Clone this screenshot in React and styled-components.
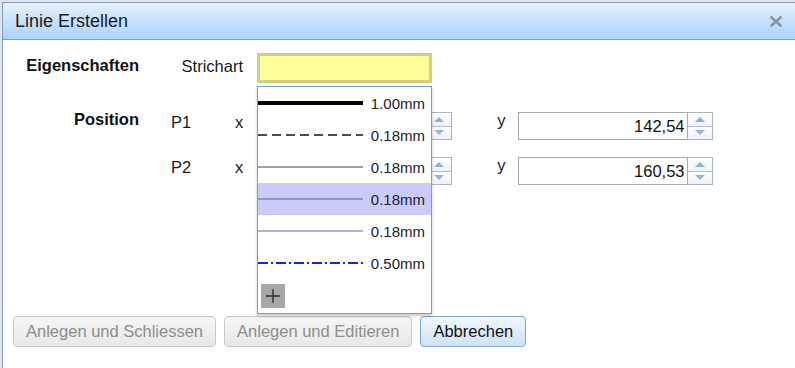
import React from "react";
import styled, { createGlobalStyle } from "styled-components";

const Global = createGlobalStyle`
  html, body { margin: 0; padding: 0; background: #e3e3e3; overflow: hidden; }
  body { font-family: "Liberation Sans", Arial, Helvetica, sans-serif; color: #1c1c1c; }
  * { box-sizing: border-box; }
`;

const Dialog = styled.div`
  margin: 2px 0 0 2px;
  width: 800px;
  height: 366px;
  overflow: hidden;
  border: 1px solid #7f9cbd;
  border-bottom: none;
  background: #fff;
  display: flex;
  flex-direction: column;
`;

const TitleBar = styled.div`
  height: 37px;
  flex-shrink: 0;
  display: flex;
  align-items: center;
  justify-content: space-between;
  padding: 0 19px 0 12px;
  background: linear-gradient(#e6f1fd, #a9d3fb);
  border-bottom: 1px solid #7e9fc3;
`;

const Title = styled.div`
  font-size: 18px;
  color: #1b1b1b;
`;

const Body = styled.div`
  display: flex;
  flex-direction: column;
  padding: 13px 0 0 10px;
`;

const FormRow = styled.div`
  display: flex;
  align-items: flex-start;
  height: ${(p) => p.$h}px;
  margin-top: ${(p) => p.$mt}px;
`;

const SectionLabel = styled.div`
  width: 126px;
  flex-shrink: 0;
  text-align: right;
  font-weight: 700;
  font-size: 16.5px;
  line-height: 20px;
  margin-top: ${(p) => p.$top || 0}px;
  color: #111;
`;

const TypeLabel = styled.div`
  margin-left: 32px;
  width: 72px;
  margin-right: 14px;
  text-align: right;
  font-size: 16.5px;
  line-height: 20px;
  margin-top: 3px;
  color: #1a1a1a;
`;

const PointLabel = styled.div`
  margin-left: 32px;
  width: 64px;
  font-size: 16.5px;
  line-height: 20px;
  color: #1a1a1a;
`;

const AxisLabel = styled.div`
  font-size: 16.5px;
  line-height: 20px;
  margin-left: ${(p) => p.$ml || 0}px;
  margin-right: ${(p) => p.$mr}px;
  margin-top: ${(p) => p.$top || 0}px;
  color: #1a1a1a;
`;

const SelectWrap = styled.div`
  position: relative;
  width: 175px;
  height: 30px;
  border: 3px solid #d1cd8b;
  background: #ffff99;
`;

const Dropdown = styled.div`
  position: absolute;
  top: 30px;
  left: -3px;
  width: 175px;
  background: #fff;
  border: 1px solid #6fa0da;
  box-shadow: 0 2px 3px rgba(0, 0, 0, 0.22);
  z-index: 10;
`;

const LineRow = styled.div`
  display: flex;
  align-items: center;
  height: 32px;
  background: ${(p) => (p.$active ? "#cbcbfa" : "transparent")};
`;

const LineSample = styled.svg`
  display: block;
  flex-shrink: 0;
`;

const LineText = styled.span`
  margin-left: auto;
  padding-right: 6px;
  font-size: 15px;
  color: #222;
`;

const PlusRow = styled.div`
  padding: 5px 3px;
`;

const PlusButton = styled.div`
  width: 24px;
  height: 24px;
  background: #a7a7a7;
  display: flex;
  align-items: center;
  justify-content: center;
`;

const SpinField = styled.div`
  display: flex;
  height: 28px;
`;

const NumberBox = styled.div`
  width: 170px;
  height: 28px;
  border: 1px solid #a9a9a9;
  text-align: right;
  padding-right: 2px;
  font-size: 16.5px;
  line-height: 26px;
  color: #111;
`;

const Spin = styled.div`
  width: 25px;
  height: 28px;
  display: flex;
  flex-direction: column;
  border: 1px solid #a8b2c2;
  border-left: none;
`;

const SpinHalf = styled.div`
  flex: 1;
  display: flex;
  align-items: center;
  justify-content: center;
  background: linear-gradient(#ffffff, #eef2f7);
  border-top: ${(p) => (p.$down ? "1px solid #b4bccb" : "none")};
`;

const Arrow = styled.div`
  width: 0;
  height: 0;
  border-left: 5px solid transparent;
  border-right: 5px solid transparent;
  ${(p) =>
    p.$down
      ? "border-top: 5px solid #96b4d9;"
      : "border-bottom: 5px solid #8eafd6;"}
`;

const ButtonRow = styled.div`
  display: flex;
  gap: 8px;
  margin-top: 131px;
`;

const Button = styled.div`
  height: 31px;
  padding: 0 12px;
  display: flex;
  align-items: center;
  border-radius: 4px;
  font-size: 16.5px;
  border: 1px solid ${(p) => (p.$primary ? "#7fa7d1" : "#cacaca")};
  color: ${(p) => (p.$primary ? "#111" : "#8d8d8d")};
  background: ${(p) =>
    p.$primary
      ? "linear-gradient(#f0f7fe, #cde2f8)"
      : "linear-gradient(#f6f6f6, #e8e8e8)"};
`;

const lines = [
  { color: "#000", w: 4, dash: "", label: "1.00mm" },
  { color: "#111", w: 1.5, dash: "9 5", label: "0.18mm" },
  { color: "#a0a0a0", w: 2, dash: "", label: "0.18mm" },
  { color: "#5c5ca6", w: 1.2, dash: "", label: "0.18mm", active: true },
  { color: "#9a9acc", w: 1.5, dash: "", label: "0.18mm" },
  { color: "#1c1cf2", w: 2, dash: "10 3 2 3", label: "0.50mm" },
];

function Spinner({ value }) {
  return (
    <SpinField>
      <NumberBox>{value}</NumberBox>
      <Spin>
        <SpinHalf>
          <Arrow />
        </SpinHalf>
        <SpinHalf $down>
          <Arrow $down />
        </SpinHalf>
      </Spin>
    </SpinField>
  );
}

export default function App() {
  return (
    <>
      <Global />
      <Dialog>
        <TitleBar>
          <Title>Linie Erstellen</Title>
          <svg width="12" height="11" viewBox="0 0 12 11">
            <path d="M1.5 1.5 L10.5 9.5 M10.5 1.5 L1.5 9.5" stroke="#8797aa" strokeWidth="2.6" strokeLinecap="square" />
          </svg>
        </TitleBar>
        <Body>
          <FormRow $h={30} $mt={0}>
            <SectionLabel $top={2}>Eigenschaften</SectionLabel>
            <TypeLabel>Strichart</TypeLabel>
            <SelectWrap>
              <Dropdown>
                {lines.map((l, i) => (
                  <LineRow key={i} $active={l.active}>
                    <LineSample width="105" height="8" viewBox="0 0 105 8">
                      <line
                        x1="0"
                        y1="4"
                        x2="105"
                        y2="4"
                        stroke={l.color}
                        strokeWidth={l.w}
                        strokeDasharray={l.dash || undefined}
                      />
                    </LineSample>
                    <LineText>{l.label}</LineText>
                  </LineRow>
                ))}
                <PlusRow>
                  <PlusButton>
                    <svg width="16" height="16" viewBox="0 0 16 16">
                      <path d="M8 1 V15 M1 8 H15" stroke="#333" strokeWidth="1.4" />
                    </svg>
                  </PlusButton>
                </PlusRow>
              </Dropdown>
            </SelectWrap>
          </FormRow>
          <FormRow $h={28} $mt={29}>
            <SectionLabel $top={-3}>Position</SectionLabel>
            <PointLabel>P1</PointLabel>
            <AxisLabel $mr={14}>x</AxisLabel>
            <Spinner value="" />
            <AxisLabel $ml={45} $mr={12} $top={-2}>y</AxisLabel>
            <Spinner value="142,54" />
          </FormRow>
          <FormRow $h={28} $mt={17}>
            <SectionLabel />
            <PointLabel>P2</PointLabel>
            <AxisLabel $mr={14}>x</AxisLabel>
            <Spinner value="" />
            <AxisLabel $ml={45} $mr={12} $top={-2}>y</AxisLabel>
            <Spinner value="160,53" />
          </FormRow>
          <ButtonRow>
            <Button>Anlegen und Schliessen</Button>
            <Button>Anlegen und Editieren</Button>
            <Button $primary>Abbrechen</Button>
          </ButtonRow>
        </Body>
      </Dialog>
    </>
  );
}
